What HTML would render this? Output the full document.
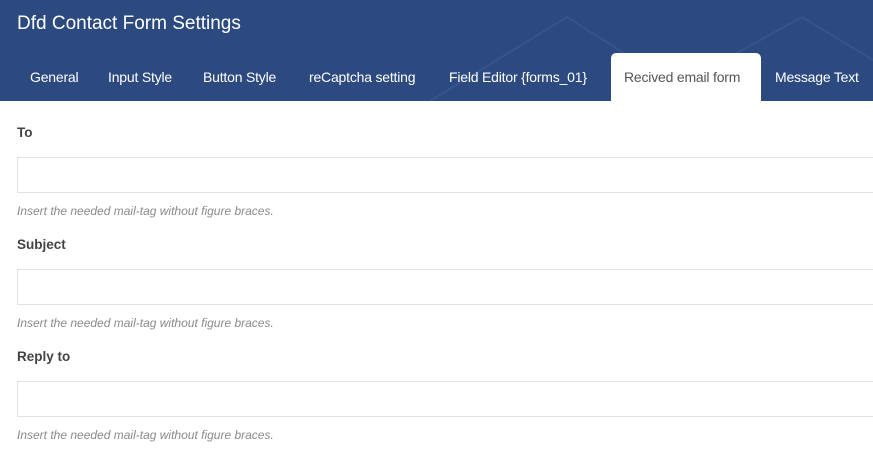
<!DOCTYPE html>
<html><head><style>
*{margin:0;padding:0;box-sizing:border-box}
body{width:873px;height:455px;overflow:hidden;background:#fff;font-family:"Liberation Sans",sans-serif;position:relative}
.hdr{position:absolute;left:0;top:0;width:873px;height:101px;background:#2c4a7f;overflow:hidden}
.title{position:absolute;left:17px;top:13px;color:#fff;font-size:19px;letter-spacing:0}
.tab{position:absolute;top:69px;color:#fff;font-size:14px;letter-spacing:-0.2px;white-space:nowrap}
.act{position:absolute;left:611px;top:53px;width:150px;height:48px;background:#fff;border-radius:5px 5px 0 0}
.tab.a{color:#555}
.lbl{position:absolute;left:17px;font-size:13.5px;font-weight:bold;color:#444}
.inp{position:absolute;left:17px;width:870px;height:36px;border:1px solid #dfe2e6;background:#fff}
.hint{position:absolute;left:17px;font-size:12px;font-style:italic;color:#8a8a8a}
</style></head><body>
<div class="hdr">
<svg width="873" height="101" style="position:absolute;left:0;top:0"><g stroke="#35548a" stroke-width="2" fill="none"><path d="M430 101 L567 17 L700 101"/><path d="M650 101 L802 17 L873 60"/></g></svg>
<div class="title">Dfd Contact Form Settings</div>
<div class="act"></div>
<div class="tab" style="left:30px">General</div>
<div class="tab" style="left:108px">Input Style</div>
<div class="tab" style="left:203px">Button Style</div>
<div class="tab" style="left:309px">reCaptcha setting</div>
<div class="tab" style="left:449px">Field Editor {forms_01}</div>
<div class="tab a" style="left:624px">Recived email form</div>
<div class="tab" style="left:775px">Message Text</div>
</div>
<div class="lbl" style="top:125px">To</div>
<div class="inp" style="top:157px"></div>
<div class="hint" style="top:204px">Insert the needed mail-tag without figure braces.</div>
<div class="lbl" style="top:237px">Subject</div>
<div class="inp" style="top:269px"></div>
<div class="hint" style="top:316px">Insert the needed mail-tag without figure braces.</div>
<div class="lbl" style="top:349px">Reply to</div>
<div class="inp" style="top:381px"></div>
<div class="hint" style="top:428px">Insert the needed mail-tag without figure braces.</div>
</body></html>
